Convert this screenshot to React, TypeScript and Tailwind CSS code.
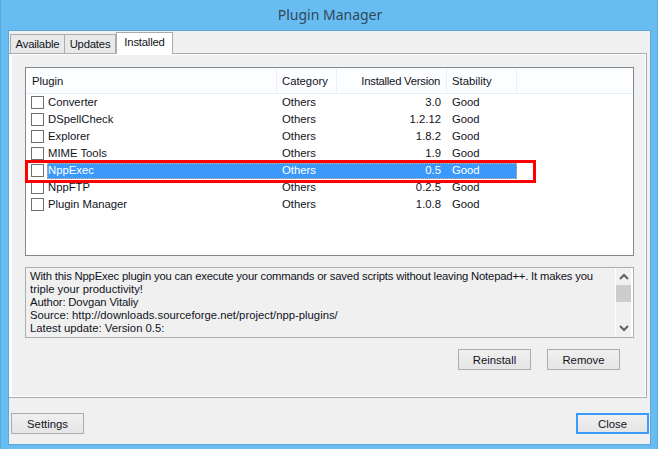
const font = { fontFamily: '"Liberation Sans", Arial, sans-serif' };
const titleFont = { fontFamily: '"Noto Sans", sans-serif' };

const rows = [
  ["Converter", "Others", "3.0", "Good"],
  ["DSpellCheck", "Others", "1.2.12", "Good"],
  ["Explorer", "Others", "1.8.2", "Good"],
  ["MIME Tools", "Others", "1.9", "Good"],
  ["NppExec", "Others", "0.5", "Good"],
  ["NppFTP", "Others", "0.2.5", "Good"],
  ["Plugin Manager", "Others", "1.0.8", "Good"],
];

function Btn({ label, focused }: { label: string; focused?: boolean }) {
  return (
    <button
      className={
        "w-[73px] h-[21px] pt-[1px] flex items-center justify-center bg-gradient-to-b from-[#f0f0f0] to-[#e5e5e5] text-[#10131c] text-[11.3px] " +
        (focused ? "border-2 border-[#3c9bff]" : "border border-[#acacac]")
      }
    >
      {label}
    </button>
  );
}

export default function App() {
  return (
    <div
      className="w-[658px] h-[449px] bg-[#67bdf1] border-l border-r border-[#5aa9dc] flex flex-col overflow-hidden text-[11.3px] leading-[17px] text-[#10131c]"
      style={font}
    >
      <div className="h-[30px] shrink-0 flex items-center justify-center text-[14px] text-[#33475a] pb-[1px] pl-[2px]" style={titleFont}>
        Plugin Manager
      </div>
      <div className="ml-[7px] mr-[6px] h-[415px] bg-[#f0f0f0] border border-[#5ea7d8] flex flex-col">
        <div className="h-[22px] flex items-end pl-[1px] relative z-10">
          <div className="h-[19px] w-[55px] bg-[#e9e9e9] border border-[#acacac] border-b-0 flex items-center justify-center tracking-[-0.2px]">
            Available
          </div>
          <div className="h-[19px] w-[51px] bg-[#e9e9e9] border border-[#acacac] border-l-0 border-b-0 flex items-center justify-center tracking-[-0.2px]">
            Updates
          </div>
          <div className="h-[22px] w-[57px] -mb-[1px] bg-white border border-[#acacac] border-b-0 flex items-center justify-center pb-[2px] tracking-[-0.2px]">
            Installed
          </div>
        </div>
        <div className="h-[345px] mr-[3px] bg-[#f0f0f0] border-t border-r border-b border-[#acacac] shadow-[inset_3px_0_0_#ffffff,inset_-1px_-1px_0_#ffffff,inset_0_1px_0_#ffffff] pl-[16px] pt-[13px] pr-[12px]">
          <div className="relative h-[189px] bg-white border border-[#828790]">
            <div className="h-[26px] flex border-b border-[#e3effc] bg-[#fdfeff]">
              <div className="w-[251px] pl-[6px] pt-[1px] border-r border-[#e8f1fb] flex items-center">Plugin</div>
              <div className="w-[60px] pl-[5px] pt-[1px] border-r border-[#e8f1fb] flex items-center">Category</div>
              <div className="w-[110px] pr-[6px] pt-[1px] border-r border-[#e8f1fb] flex items-center justify-end tracking-[-0.25px]">Installed Version</div>
              <div className="w-[70px] pl-[5px] pt-[1px] border-r border-[#e8f1fb] flex items-center">Stability</div>
            </div>
            <div className="flex flex-col">
              {rows.map((r) => {
                const sel = r[0] === "NppExec";
                return (
                  <div key={r[0]} className="h-[17px] flex items-center">
                    <div className="w-[21px] shrink-0 pl-[5px]">
                      <div className="w-[13px] h-[13px] bg-white border border-[#707070]" />
                    </div>
                    <div
                      className={
                        "flex h-[16px] items-center " +
                        (sel ? "bg-[#3b99fc] text-white outline-1 outline-dotted -outline-offset-1 outline-[#e8b070]" : "")
                      }
                    >
                      <div className="w-[230px] pl-[1px]">{r[0]}</div>
                      <div className="w-[60px] pl-[5px]">{r[1]}</div>
                      <div className="w-[110px] pr-[6px] text-right">{r[2]}</div>
                      <div className="w-[70px] pl-[5px]">{r[3]}</div>
                    </div>
                  </div>
                );
              })}
            </div>
            <div className="absolute left-[-1px] top-[92px] w-[511px] h-[23px] border-[3px] border-[#ff0000]" />
          </div>
          <div className="mt-[11px] h-[71px] flex border border-[#abadb3] bg-[#f0f0f0]">
            <div className="flex-1 min-w-0 overflow-hidden pl-[4px] pt-[2px] leading-[13px]">
              <p className="whitespace-nowrap tracking-[-0.19px]">With this NppExec plugin you can execute your commands or saved scripts without leaving Notepad++. It makes you</p>
              <p>triple your productivity!</p>
              <p className="tracking-[-0.15px]">Author: Dovgan Vitaliy</p>
              <p>Source: http://downloads.sourceforge.net/project/npp-plugins/</p>
              <p>Latest update: Version 0.5:</p>
            </div>
            <div className="w-[18px] shrink-0 border-l border-white border-r-2 border-r-white flex flex-col items-center py-[5px]">
              <svg width="10" height="8" viewBox="0 0 10 8" fill="none" stroke="#606060" strokeWidth="2"><path d="M1 6 L5 2 L9 6" /></svg>
              <div className="w-full h-[17px] bg-[#cdcdcd] mt-[4px]" />
              <svg className="mt-auto" width="10" height="8" viewBox="0 0 10 8" fill="none" stroke="#606060" strokeWidth="2"><path d="M1 2 L5 6 L9 2" /></svg>
            </div>
          </div>
          <div className="mt-[11px] flex justify-end gap-[16px] pr-[14px]">
            <Btn label="Reinstall" />
            <Btn label="Remove" />
          </div>
        </div>
        <div className="flex justify-between pl-[2px] pr-[1px] mt-[15px]">
          <Btn label="Settings" />
          <Btn label="Close" focused />
        </div>
      </div>
    </div>
  );
}
